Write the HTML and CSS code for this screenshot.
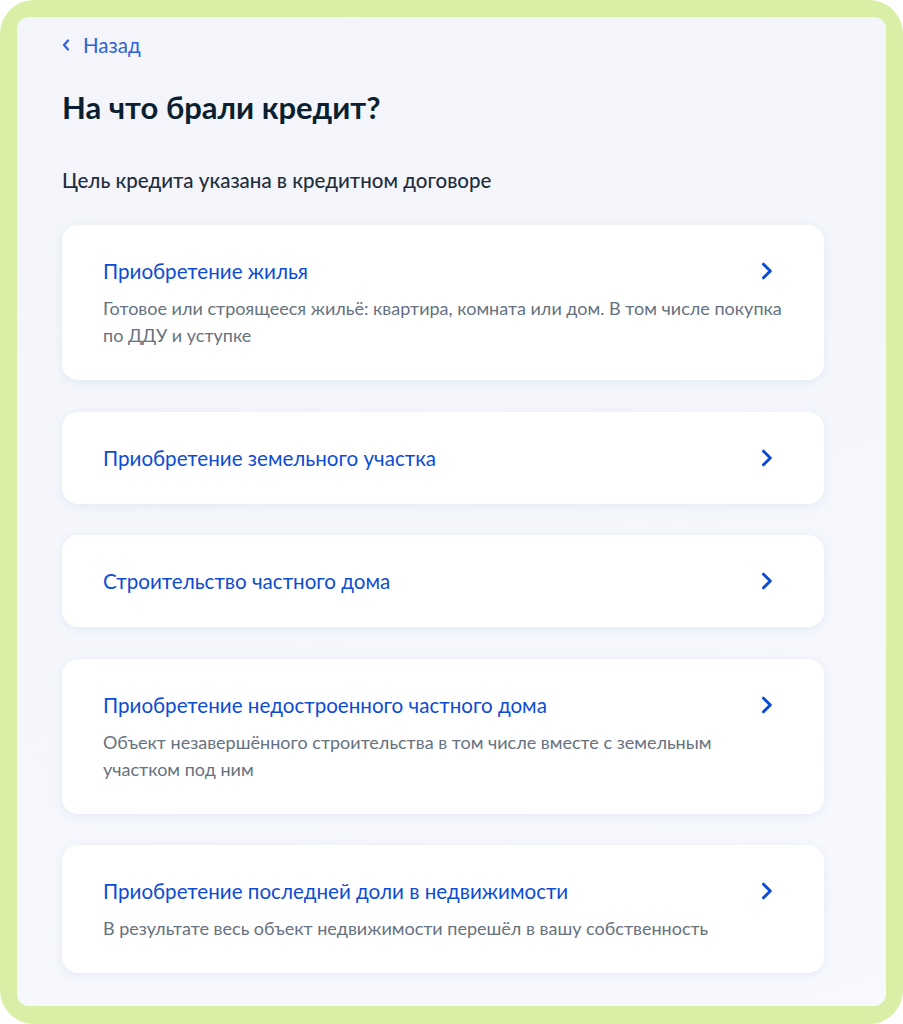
FILE: index.html
```html
<!DOCTYPE html>
<html lang="ru">
<head>
<meta charset="utf-8">
<title>На что брали кредит?</title>
<link rel="stylesheet" href="styles.css">
</head>
<body>
<div class="frame">
  <div class="panel">
    <a class="back" href="#">
      <svg class="back-icon" width="8" height="12" viewBox="0 0 8 12"><path d="M6 1.5 L2 6 L6 10.5" fill="none" stroke="currentColor" stroke-width="2.2" stroke-linecap="round" stroke-linejoin="round"/></svg>
      <span>Назад</span>
    </a>
    <h1 class="title">На что брали кредит?</h1>
    <p class="lead">Цель кредита указана в кредитном договоре</p>
    <div class="list">
      <a class="card" href="#">
        <div class="card-title">Приобретение жилья</div>
        <svg class="chev" width="14" height="18" viewBox="0 0 14 18"><path d="M3.5 2.2 L10.3 9 L3.5 15.8" fill="none" stroke="currentColor" stroke-width="3" stroke-linecap="round" stroke-linejoin="round"/></svg>
        <div class="card-desc">Готовое или строящееся жильё: квартира, комната или дом. В том числе покупка по ДДУ и уступке</div>
      </a>
      <a class="card" href="#">
        <div class="card-title">Приобретение земельного участка</div>
        <svg class="chev" width="14" height="18" viewBox="0 0 14 18"><path d="M3.5 2.2 L10.3 9 L3.5 15.8" fill="none" stroke="currentColor" stroke-width="3" stroke-linecap="round" stroke-linejoin="round"/></svg>
      </a>
      <a class="card" href="#">
        <div class="card-title">Строительство частного дома</div>
        <svg class="chev" width="14" height="18" viewBox="0 0 14 18"><path d="M3.5 2.2 L10.3 9 L3.5 15.8" fill="none" stroke="currentColor" stroke-width="3" stroke-linecap="round" stroke-linejoin="round"/></svg>
      </a>
      <a class="card" href="#">
        <div class="card-title">Приобретение недостроенного частного дома</div>
        <svg class="chev" width="14" height="18" viewBox="0 0 14 18"><path d="M3.5 2.2 L10.3 9 L3.5 15.8" fill="none" stroke="currentColor" stroke-width="3" stroke-linecap="round" stroke-linejoin="round"/></svg>
        <div class="card-desc">Объект незавершённого строительства в том числе вместе с земельным участком под ним</div>
      </a>
      <a class="card" href="#">
        <div class="card-title">Приобретение последней доли в недвижимости</div>
        <svg class="chev" width="14" height="18" viewBox="0 0 14 18"><path d="M3.5 2.2 L10.3 9 L3.5 15.8" fill="none" stroke="currentColor" stroke-width="3" stroke-linecap="round" stroke-linejoin="round"/></svg>
        <div class="card-desc">В результате весь объект недвижимости перешёл в вашу собственность</div>
      </a>
    </div>
  </div>
</div>
</body>
</html>
```

FILE: styles.css
```css
* { box-sizing: border-box; }
html, body {
  margin: 0;
  padding: 0;
  background: #ffffff;
}
body {
  font-family: Lato, "Noto Sans", sans-serif;
  width: 903px;
  height: 1024px;
  overflow: hidden;
}
.frame {
  width: 903px;
  height: 1024px;
  background: #d9efa6;
  border-radius: 34px;
  padding: 17px 17px 18px 17px;
}
.panel {
  height: 100%;
  border-radius: 12px;
  background: linear-gradient(160deg, #f3f5fa 0%, #f5f7fc 60%, #f8f9fe 100%);
  padding: 15px 62px 0 45px;
}
.back {
  display: flex;
  align-items: center;
  gap: 13px;
  color: #2f62d9;
  text-decoration: none;
  font-size: 20.5px;
  line-height: 26px;
  height: 26px;
}
.back-icon { display: block; }
.title {
  margin: 31px 0 0 0;
  font-size: 31px;
  line-height: 36px;
  font-weight: 700;
  color: #0b1f33;
}
.lead {
  margin: 43px 0 0 0;
  font-size: 20.5px;
  line-height: 24px;
  font-weight: 500;
  color: #1f2d3d;
}
.list {
  margin-top: 33px;
  display: flex;
  flex-direction: column;
  gap: 31.5px;
}
.card {
  display: grid;
  grid-template-columns: 1fr auto;
  align-items: start;
  background: #ffffff;
  border-radius: 16px;
  box-shadow: 0 2px 10px rgba(100, 130, 190, 0.12);
  padding: 34px 50px 34px 41px;
  text-decoration: none;
}
.card-title {
  font-size: 20.6px;
  line-height: 24px;
  color: #0d4cd3;
}
.card-desc {
  grid-column: 1 / -1;
  margin-top: 12px;
  margin-bottom: -3px;
  margin-right: -12px;
  font-size: 18px;
  line-height: 27px;
  color: #66727f;
}
.chev {
  display: block;
  color: #0d4cd3;
  margin-top: 3px;
}
```
